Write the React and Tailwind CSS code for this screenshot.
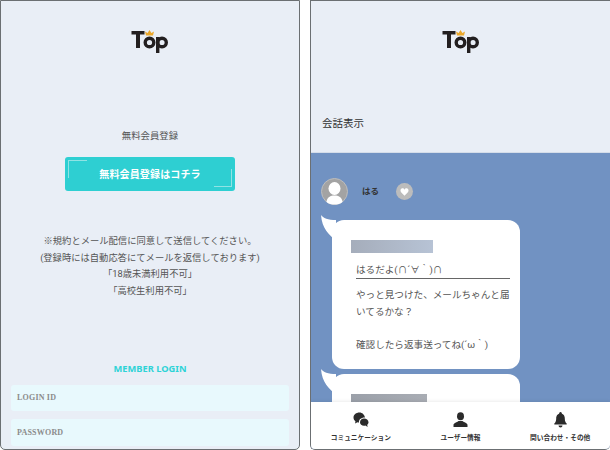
const jp = "font-['Roboto','Noto_Sans_CJK_JP',sans-serif]";

function Logo() {
  return (
    <svg width="38" height="24" viewBox="0 0 38 24" className="block">
      <path d="M0.5 2H13.5V5.6H9V19H5V5.6H0.5Z" fill="#231f20" />
      <path d="M15 6.5L14 2.5L16.6 4L18.5 1L20.4 4L23 2.5L22 6.5Z" fill="#eaa72b" />
      <circle cx="18.5" cy="13.5" r="4.3" fill="none" stroke="#231f20" strokeWidth="3.4" />
      <circle cx="31" cy="13.5" r="4.3" fill="none" stroke="#231f20" strokeWidth="3.4" />
      <rect x="25" y="8" width="3.4" height="16" fill="#231f20" />
    </svg>
  );
}

function Corners() {
  return (
    <>
      <span className="absolute left-[3px] top-[3px] h-[18px] w-[19px] border-l border-t border-[#8fe3e4]" />
      <span className="absolute right-[3px] bottom-[4px] h-[18px] w-[18px] border-r border-b border-[#8fe3e4]" />
    </>
  );
}

function SignupPanel() {
  return (
    <section className={`w-[300px] h-[450px] shrink-0 overflow-hidden rounded-b-[5px] border border-[#6b6f72] bg-[#e9eef6] flex flex-col items-center ${jp}`}>
      <div className="mt-[28px]"><Logo /></div>
      <p className="mt-[74px] text-[9.4px] leading-[18px] text-[#555]">無料会員登録</p>
      <button className="relative mt-[12px] h-[34px] w-[170px] rounded-[3px] bg-[#2ecfd2] text-[10px] font-bold tracking-[0.15px] text-white">
        <Corners />
        無料会員登録はコチラ
      </button>
      <div className="mt-[42px] text-center text-[9.3px] leading-[16.7px] text-[#555]">
        <p>※規約とメール配信に同意して送信してください。</p>
        <p>(登録時には自動応答にてメールを返信しております)</p>
        <p>「18歳未満利用不可」</p>
        <p>「高校生利用不可」</p>
      </div>
      <h2 className="mt-[60px] font-['Noto_Sans',sans-serif] text-[9.3px] leading-[18px] font-bold text-[#2ed3d6]">MEMBER LOGIN</h2>
      <div className="mt-[7px] flex w-full flex-col gap-[8px] px-[10px]">
        <div className="h-[26px] rounded-[3px] bg-[#e8f9fd] px-[6px] font-['Liberation_Serif',serif] text-[8px] leading-[26px] font-bold tracking-[0.2px] text-[#8b8b8b]">LOGIN ID</div>
        <div className="h-[27px] rounded-[3px] bg-[#e8f9fd] px-[6px] font-['Liberation_Serif',serif] text-[8px] leading-[27px] font-bold tracking-[0.2px] text-[#8b8b8b]">PASSWORD</div>
      </div>
    </section>
  );
}

function Avatar() {
  return (
    <svg width="27" height="27" viewBox="0 0 27 27" className="block">
      <circle cx="13.5" cy="13.5" r="13" fill="#a3a3a3" stroke="#bdbdbd" />
      <ellipse cx="13.5" cy="10.5" rx="6" ry="6.5" fill="#fff" />
      <path d="M5.5 24C6 19 9.5 17.5 13.5 17.5S21 19 21.5 24C19.5 26 16.5 26.5 13.5 26.5S7.5 26 5.5 24Z" fill="#fff" />
    </svg>
  );
}

function Heart() {
  return (
    <span className="ml-[17px] flex h-[17px] w-[17px] items-center justify-center rounded-full bg-[#bcbcbc]">
      <svg width="9" height="8" viewBox="0 0 24 22">
        <path d="M12 21C5 15 1 11.5 1 7A5.7 5.7 0 0 1 12 4.5 5.7 5.7 0 0 1 23 7C23 11.5 19 15 12 21Z" fill="#fff" />
      </svg>
    </span>
  );
}

function Tail() {
  return (
    <svg width="15" height="26" viewBox="0 0 15 26" className="absolute left-[-11px] top-[-5px]">
      <path d="M0 0C2 3 7 5 15 5V26C8 19 1 14 0 0Z" fill="#fff" />
    </svg>
  );
}

function Bubble({ className, children }) {
  return (
    <div className={`relative ml-[21px] w-[188px] shrink-0 rounded-[12px] bg-white ${className}`}>
      <Tail />
      {children}
    </div>
  );
}

function NavItem({ icon, label }) {
  return (
    <div className="flex w-[100px] flex-col items-center">
      <div className="flex h-[17px] items-center">{icon}</div>
      <span className="mt-[4px] text-[6.7px] leading-[12px] font-bold text-[#333]">{label}</span>
    </div>
  );
}

function ChatIcon() {
  return (
    <svg width="16" height="16" viewBox="0 0 16 16" fill="#2b2b2b">
      <path d="M6.5 0.5C3 0.5 0.5 2.8 0.5 5.6 0.5 7.2 1.3 8.5 2.5 9.4L2 11.5 4.5 10.3C5 10.5 5.5 10.6 6 10.6 5.6 8 7.8 5.5 12 5.6 11.5 2.7 9.3 0.5 6.5 0.5Z" />
      <path d="M11 6.6C8.8 6.6 7 8.2 7 10.2S8.8 13.8 11 13.8C11.5 13.8 12 13.7 12.4 13.6L14.6 15 14.2 12.7C15.1 12 15.5 11.2 15.5 10.2 15.5 8.2 13.4 6.6 11 6.6Z" />
    </svg>
  );
}

function UserIcon() {
  return (
    <svg width="15" height="15" viewBox="0 0 15 15" fill="#2b2b2b">
      <ellipse cx="7.5" cy="4.2" rx="3.5" ry="4" />
      <path d="M0.5 15V13C0.5 10.8 4 10.5 5.5 9H9.5C11 10.5 14.5 10.8 14.5 13V15Z" />
    </svg>
  );
}

function BellIcon() {
  return (
    <svg width="13" height="16" viewBox="0 0 13 16" fill="#2b2b2b">
      <circle cx="6.5" cy="1.3" r="1.2" />
      <path d="M6.5 1.5C3.5 1.5 2.2 4 2.2 6.5 2.2 9 1.5 10.5 0.3 11.5V12.5H12.7V11.5C11.5 10.5 10.8 9 10.8 6.5 10.8 4 9.5 1.5 6.5 1.5Z" />
      <path d="M4.5 13.5H8.5A2 2 0 0 1 4.5 13.5Z" />
    </svg>
  );
}

function ChatPanel() {
  return (
    <section className={`relative ml-[10px] h-[450px] w-[300px] shrink-0 overflow-hidden rounded-b-[5px] border border-r-0 border-[#6b6f72] bg-[#e9eef6] flex flex-col ${jp}`}>
      <div className="flex justify-center pt-[28px]"><Logo /></div>
      <h1 className="mt-[62px] pl-[11px] font-['Noto_Sans_CJK_JP',serif] text-[10.5px] leading-[16px] text-[#333]">会話表示</h1>
      <div className="mt-[21px] flex flex-1 flex-col overflow-hidden border-t border-[#d5dde9] bg-[#7192c2] pt-[25px]">
        <div className="flex items-center pl-[10px]">
          <Avatar />
          <span className="ml-[14px] text-[8.5px] font-bold text-[#333]">はる</span>
          <Heart />
        </div>
        <Bubble className="mt-[15px] h-[149px] px-[19px] pt-[20px] text-[9.6px] leading-[16.7px] text-[#555]">
          <div className="h-[13px] w-[82px] bg-gradient-to-r from-[#a5adbb] to-[#b7c3d5]" />
          <p className="ml-[5px] mt-[9px] w-[154px] border-b border-[#666] leading-[16px]">はるだよ(∩´∀｀)∩</p>
          <p className="ml-[5px] mt-[8px] w-[154px]">やっと見つけた、メールちゃんと届いてるかな？</p>
          <p className="ml-[5px] mt-[16.7px]">確認したら返事送ってね(´ω｀)</p>
        </Bubble>
        <Bubble className="mt-[5px] h-[60px] px-[19px] pt-[20px]">
          <div className="h-[13px] w-[76px] bg-gradient-to-r from-[#9ba0a9] to-[#a9adb4]" />
        </Bubble>
      </div>
      <nav className="absolute inset-x-0 bottom-0 flex h-[47px] items-start justify-between bg-white pt-[9px] shadow-[0_-1px_3px_rgba(0,0,0,0.08)]">
        <NavItem icon={<ChatIcon />} label="コミュニケーション" />
        <NavItem icon={<UserIcon />} label="ユーザー情報" />
        <NavItem icon={<BellIcon />} label="問い合わせ・その他" />
      </nav>
    </section>
  );
}

export default function App() {
  return (
    <div className="flex h-[450px] w-[610px] overflow-hidden bg-white">
      <SignupPanel />
      <ChatPanel />
    </div>
  );
}
